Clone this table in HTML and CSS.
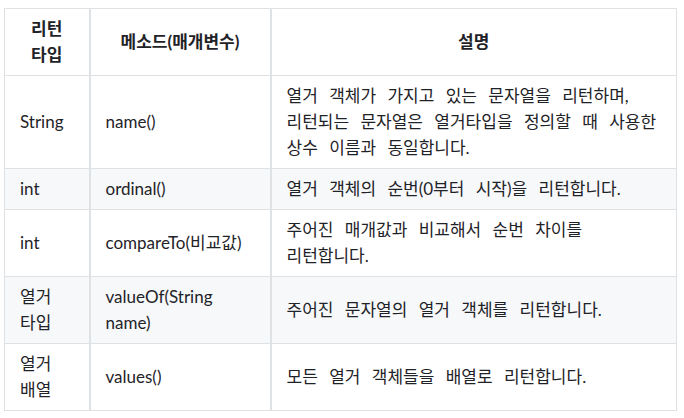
FILE: index.html
```html
<!DOCTYPE html>
<html lang="ko">
<head>
<meta charset="utf-8">
<link rel="stylesheet" href="styles.css">
</head>
<body>
<table class="api-table">
  <colgroup>
    <col class="col-type">
    <col class="col-method">
    <col class="col-desc">
  </colgroup>
  <thead>
    <tr>
      <th class="cell head">리턴 타입</th>
      <th class="cell head">메소드(매개변수)</th>
      <th class="cell head">설명</th>
    </tr>
  </thead>
  <tbody>
    <tr class="row">
      <td class="cell">String</td>
      <td class="cell">name()</td>
      <td class="cell">열거 객체가 가지고 있는 문자열을 리턴하며, 리턴되는 문자열은 열거타입을 정의할 때 사용한 상수 이름과 동일합니다.</td>
    </tr>
    <tr class="row">
      <td class="cell">int</td>
      <td class="cell">ordinal()</td>
      <td class="cell">열거 객체의 순번(0부터 시작)을 리턴합니다.</td>
    </tr>
    <tr class="row">
      <td class="cell">int</td>
      <td class="cell">compareTo(비교값)</td>
      <td class="cell">주어진 매개값과 비교해서 순번 차이를 리턴합니다.</td>
    </tr>
    <tr class="row">
      <td class="cell">열거 타입</td>
      <td class="cell">valueOf(String name)</td>
      <td class="cell">주어진 문자열의 열거 객체를 리턴합니다.</td>
    </tr>
    <tr class="row">
      <td class="cell">열거 배열</td>
      <td class="cell">values()</td>
      <td class="cell">모든 열거 객체들을 배열로 리턴합니다.</td>
    </tr>
  </tbody>
</table>
</body>
</html>
```
FILE: styles.css
```css
html, body {
  background: #ffffff;
}
body {
  margin: 8px 0 0 4px;
  font-family: "Lato", "Noto Sans CJK KR", sans-serif;
  font-size: 17px;
  color: #1f2328;
}
.api-table {
  width: 673px;
  border-collapse: collapse;
  table-layout: fixed;
}
.col-type { width: 85px; }
.col-method { width: 181px; }
.cell {
  border: 1px solid #dfe2e5;
  padding: 7px 15px;
  line-height: 26px;
  text-align: left;
  vertical-align: middle;
  word-spacing: 7px;
  word-break: keep-all;
  font-weight: 400;
}
.cell + .cell {
  border-left: 2px solid #dfe2e5;
}
.head {
  font-weight: 700;
  text-align: center;
}
.row:nth-child(even) {
  background: #f6f8fa;
}
```
